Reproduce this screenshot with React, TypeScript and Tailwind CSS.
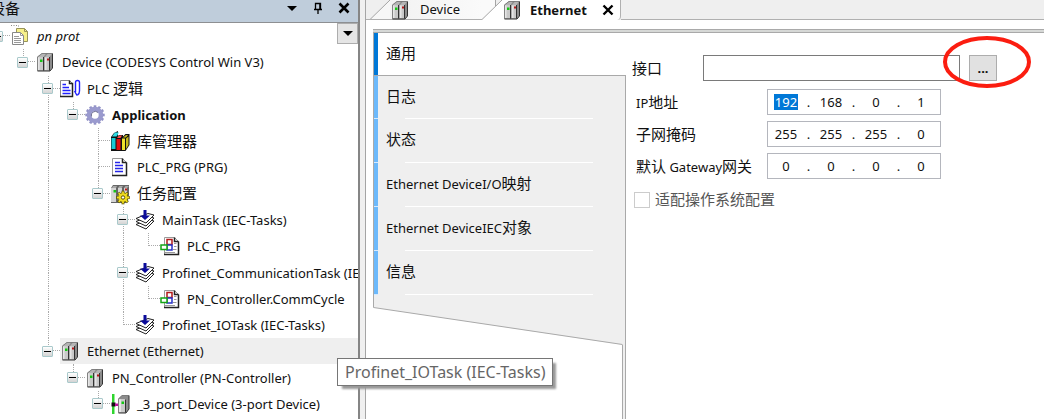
import type { ReactNode } from 'react';

type IconName = 'project' | 'device' | 'logic' | 'gear' | 'books' | 'page' | 'config' | 'task' | 'call' | 'port';
type Line = 'none' | 'full' | 'end' | 'bar';

interface TreeRow {
  label: string;
  icon: IconName;
  lines: Line[];
  expandable?: boolean;
  bold?: boolean;
  italic?: boolean;
  selected?: boolean;
}

const rows: TreeRow[] = [
  { label: 'pn prot', icon: 'project', lines: ['end'], expandable: true, italic: true },
  { label: 'Device (CODESYS Control Win V3)', icon: 'device', lines: ['none', 'end'], expandable: true },
  { label: 'PLC 逻辑', icon: 'logic', lines: ['none', 'none', 'full'], expandable: true },
  { label: 'Application', icon: 'gear', lines: ['none', 'none', 'bar', 'end'], expandable: true, bold: true },
  { label: '库管理器', icon: 'books', lines: ['none', 'none', 'bar', 'none', 'full'] },
  { label: 'PLC_PRG (PRG)', icon: 'page', lines: ['none', 'none', 'bar', 'none', 'full'] },
  { label: '任务配置', icon: 'config', lines: ['none', 'none', 'bar', 'none', 'end'], expandable: true },
  { label: 'MainTask (IEC-Tasks)', icon: 'task', lines: ['none', 'none', 'bar', 'none', 'none', 'full'], expandable: true },
  { label: 'PLC_PRG', icon: 'call', lines: ['none', 'none', 'bar', 'none', 'none', 'bar', 'end'] },
  { label: 'Profinet_CommunicationTask (IEC-Tasks)', icon: 'task', lines: ['none', 'none', 'bar', 'none', 'none', 'full'], expandable: true },
  { label: 'PN_Controller.CommCycle', icon: 'call', lines: ['none', 'none', 'bar', 'none', 'none', 'bar', 'end'] },
  { label: 'Profinet_IOTask (IEC-Tasks)', icon: 'task', lines: ['none', 'none', 'bar', 'none', 'none', 'end'] },
  { label: 'Ethernet (Ethernet)', icon: 'device', lines: ['none', 'none', 'end'], expandable: true, selected: true },
  { label: 'PN_Controller (PN-Controller)', icon: 'device', lines: ['none', 'none', 'none', 'end'], expandable: true },
  { label: '_3_port_Device (3-port Device)', icon: 'port', lines: ['none', 'none', 'none', 'none', 'end'], expandable: true },
];

const pages = ['通用', '日志', '状态', 'Ethernet DeviceI/O映射', 'Ethernet DeviceIEC对象', '信息'];

const addresses = [
  { label: 'IP地址', parts: ['192', '168', '0', '1'], active: 0 },
  { label: '子网掩码', parts: ['255', '255', '255', '0'], active: -1 },
  { label: '默认 Gateway网关', parts: ['0', '0', '0', '0'], active: -1 },
];

function Label({ text }: { text: string }) {
  return (
    <>
      {text.split(/([\u4e00-\u9fff]+)/).map((part, i) =>
        i % 2 ? <span key={i} className="text-[15px]">{part}</span> : part,
      )}
    </>
  );
}

function PageShape({ x = 0 }: { x?: number }) {
  return (
    <g transform={`translate(${x} 0)`}>
      <path d="M2.5 1.5h10l4 4v13h-14z" fill="#fff" stroke="#9a9a9a" />
      <path d="M12.5 1.5v4h4M16.5 5.5V18.5H2" fill="none" stroke="#222" strokeWidth="1.5" />
    </g>
  );
}

function Cog({ r, ring, fill, edge }: { r: number; ring: number; fill: string; edge: string }) {
  const teeth = [0, 45, 90, 135];
  return (
    <g>
      {teeth.map((a) => (
        <path key={a} d={`M0 ${-r}V${r}`} stroke={edge} strokeWidth={r * 0.42} transform={`rotate(${a})`} />
      ))}
      <circle r={r * 0.7} fill={fill} stroke={edge} strokeWidth=".8" />
      {teeth.map((a) => (
        <path key={a} d={`M0 ${-r + 0.7}v${r * 0.35}M0 ${r - 0.7}v${-r * 0.35}`} stroke={fill} strokeWidth={r * 0.26} transform={`rotate(${a})`} />
      ))}
      <circle r={ring} fill="#fff" stroke={edge} />
    </g>
  );
}

function Icon({ name }: { name: IconName }) {
  const art: Record<IconName, ReactNode> = {
    project: (
      <g transform="translate(-1 -1)">
        <path d="M.5 14V.5h9v4" fill="none" stroke="#888" strokeDasharray="1 1.5" />
        <path d="M7.500 3.500h8l3 3v10h-11z" fill="#f6f08a" stroke="#98945a" />
        <path d="M15.500 3.500v3h3" fill="none" stroke="#98945a" />
        <path d="M3.500 7.500h8l3 3v9h-11z" fill="#fff" stroke="#888" />
        <path d="M11.500 7.500v3h3M5 11.500h5M5 13.500h7M5 15.500h7M5 17.500h7" fill="none" stroke="#999" />
      </g>
    ),
    device: (
      <>
        <path d="M2 5 7 1h10.500v14.500L15 19H2z" fill="#8c8c8c" />
        <path d="M2.500 5 7 1.500h4L8.500 5zM10 5l3-3.500h4L14.500 5z" fill="#b5b5b5" />
        <path d="M2.500 5H8v13.500H2.500zM9.500 5H14v13.500H9.500z" fill="#c9c9c9" />
        <path d="M3 5.500h1.500V18H3zM10 5.500h1.500V18H10z" fill="#e6e6e6" />
        <path d="M8.500 5v13.500M14.500 5v13.500M2.500 19H15l2.500-3V1.500" fill="none" stroke="#333" />
        <path d="M2.500 19V5L7 1.500h10" fill="none" stroke="#777" strokeWidth=".8" />
        <path d="M5 7.500h2.500V10H5z" fill="#14c814" />
        <path d="M12 6.500h2V8.500h-2z" fill="#b81818" />
      </>
    ),
    logic: (
      <>
        <path d="M.5 1.500h9l3 3v13H.5z" fill="#fff" stroke="#888" />
        <path d="M9.500 1.500v3h3v13H0" fill="none" stroke="#222" strokeWidth="1.500" />
        <path d="M2.500 5.500H6M2.500 8.500H9M2.500 11.500h8M2.500 14.500h8" stroke="#2020ff" strokeWidth="1.600" />
        <path d="M15.500 13V3.500q0-2 2-2t2 2V12q0 3 -2 4M14.500 12l2.500 4.500" fill="none" stroke="#2020ff" strokeWidth="1.400" />
      </>
    ),
    gear: (
      <g transform="translate(10 10)">
        {[0, 30, 60, 90, 120, 150].map((a) => (
          <path key={a} d="M0-9.700V9.700" stroke="#9292c6" strokeWidth="2.600" transform={`rotate(${a})`} />
        ))}
        <circle r="6" fill="#fff" stroke="#9a9ace" strokeWidth="4.600" />
        <path d="M-3.600 1.500A4 4 0 0 1 3-2.500" fill="none" stroke="#6e6e92" />
      </g>
    ),
    books: (
      <>
        <path d="M1 6 4 2l4-2v4L7 20H1z" fill="#111" />
        <path d="M1.500 7h4v11h-4z" fill="#16cbd5" />
        <path d="M2 5.500 5 1.500h4L6.500 5.500z" fill="#30dce4" />
        <path d="M6 7l3-3h4v16H6z" fill="#111" />
        <path d="M6.500 8h4v11h-4z" fill="#e01010" />
        <path d="M7 7l2-2.500h3L10.500 7z" fill="#ff4b4b" />
        <path d="M11.500 7l4-4h4v11l-4 6h-4z" fill="#111" />
        <path d="M12 7.500h3V19h-3z" fill="#eee22a" />
        <path d="M13 6.500 16 4h2l-2 2.500zM16 7.500l2.500-2V14L16 18z" fill="#c6ba1d" />
      </>
    ),
    page: (
      <>
        <PageShape />
        <path d="M5 5.500h5M5 8.500h8M5 11.500h8M5 14.500h8" stroke="#2525e8" strokeWidth="1.600" />
      </>
    ),
    config: (
      <>
        <path d="M1 4 3 1h16v13l-3 5H1z" fill="#666" />
        <path d="M1 4h5v14H1zM8 4h4v14H8zM14 4h3v10h-3z" fill="#d5d5d5" />
        <path d="M3 2h4L6 4H2zM9.500 2H13l-1.500 2H8zM15.500 2H19l-2 2h-3z" fill="#aaa" />
        <path d="M3.500 6h2.500v2.500H3.500z" fill="#18c418" />
        <path d="M15 4.500h2v2h-2z" fill="#c01c1c" />
        <g transform="translate(13 13.500)"><Cog r={6.800} ring={1.700} fill="#f0dc20" edge="#575000" /></g>
      </>
    ),
    task: (
      <>
        <path d="M1 14.500 13 9.500l6 1.500-8 8-10-4.500z" fill="#fff" stroke="#222" />
        <path d="M1 11.500 13 6.500l6 1.500-8 8-10-4.500z" fill="#fff" stroke="#222" />
        <path d="M1 8.500 13 3.500l6 1.500-8 8L1 8.500z" fill="#fff" stroke="#222" />
        <path d="M8.500 0h3v5.500H15l-5 4.500-5-4.500h3.500z" fill="#0b0b9a" />
      </>
    ),
    call: (
      <>
        <PageShape x={2} />
        <path d="M14 7.500h2.500M14 10.500h2.500M13 13.500h3.500M5 16.500h10" stroke="#999" />
        <path d="M7 3.500h5v5H7z" fill="#fff" stroke="#b31a1a" strokeWidth="1.500" />
        <path d="M7 9h5v5H7z" fill="#fff" stroke="#2732c8" strokeWidth="1.500" />
        <path d="M1 9h6v4.500H1z" fill="#fff" stroke="#15a415" strokeWidth="1.500" />
      </>
    ),
    port: (
      <>
        <path d="M2 0h2.500v20H2z" fill="#2ed52e" />
        <path d="M1.500 8.500h4v4h-4z" fill="#111" />
        <path d="M5 9.500h4v2.500H5z" fill="#c010a0" />
        <path d="M8 5 12 1h7v14l-3 4H8z" fill="#8c8c8c" />
        <path d="M8.500 5h7v13.500h-7z" fill="#cacaca" />
        <path d="M9 5.500h2V18H9z" fill="#e6e6e6" />
        <path d="M15.500 5.500V18.500M8.500 19H16l3-4V1.500" fill="none" stroke="#333" />
        <path d="M8.500 19V5L12 1.500h6.500" fill="none" stroke="#777" strokeWidth=".8" />
        <path d="M11.500 7.500H14V10h-2.500z" fill="#14c814" />
      </>
    ),
  };
  return (
    <svg width="20" height="20" viewBox="0 0 20 20" className="shrink-0 overflow-visible" aria-hidden="true">
      {art[name]}
    </svg>
  );
}

function Branch({ line, button }: { line: Line; button: boolean }) {
  const elbow = line === 'full' || line === 'end';
  return (
    <span className="relative grid w-[25px] shrink-0 grid-cols-[13px_12px] grid-rows-2">
      <span className={`col-start-2 border-dotted border-[#aaa] ${line !== 'none' ? 'border-l' : ''} ${elbow ? 'border-b' : ''}`} />
      <span className={`col-start-2 border-dotted border-[#aaa] ${line === 'full' || line === 'bar' ? 'border-l' : ''}`} />
      {button && (
        <button
          type="button"
          aria-label="Collapse"
          className="absolute inset-0 m-auto flex size-[11px] items-center justify-center rounded-[1px] border border-[#a9c9cb] bg-linear-to-b from-white to-[#d4d4d4]"
        >
          <span className="h-px w-[7px] bg-black" />
        </button>
      )}
    </span>
  );
}

function Slant({ active }: { active?: boolean }) {
  return (
    <svg width="20" height="20" viewBox="0 0 20 20" className="shrink-0" aria-hidden="true">
      {active && <path d="M0 0h14v20H0z" fill="#fafafa" />}
      <path d="M0 20 20 0v20z" fill={active ? '#fff' : '#f7f7f7'} />
      <path d="M0 19.500 20 0" fill="none" stroke="#a5a5a5" />
      {active && <path d="M13.500 0v6" stroke="#a5a5a5" />}
      {!active && <path d="M0 19.500h20" stroke="#b0b0b0" />}
    </svg>
  );
}

function DevicePane() {
  return (
    <aside className="flex w-[360px] shrink-0 flex-col border-r-2 border-[#858585] bg-white">
      <header className="flex h-[23px] shrink-0 items-center border-b border-[#8d8f92] bg-[#bfcddb]">
        <h2 className="-ml-[10px] -mt-1.5 flex-1 text-[15px]">设备</h2>
        <div className="-mt-1.5 mr-[7px] flex gap-[12px]">
          <button type="button" aria-label="Menu">
            <svg width="14" height="14" viewBox="0 0 14 14"><path d="M2 5h10L7 10z" /></svg>
          </button>
          <button type="button" aria-label="Pin">
            <svg width="14" height="14" viewBox="0 0 14 14" fill="none" stroke="#000">
              <path d="M4.500 8V2.500h5V8M3 8.500h8M7 9v4" strokeWidth="1.300" />
              <path d="M9 3v5" strokeWidth="1.500" />
            </svg>
          </button>
          <button type="button" aria-label="Close">
            <svg width="14" height="14" viewBox="0 0 14 14"><path d="m2.500 2.500 9 9m0-9-9 9" stroke="#000" strokeWidth="2.600" /></svg>
          </button>
        </div>
      </header>
      <div className="relative flex min-h-0 flex-1 overflow-hidden pb-0.5">
        <ul className="-ml-[15px] grid min-w-0 flex-1 auto-rows-fr">
          {rows.map((row, i) => (
            <li key={i} className="flex min-h-0 min-w-0">
              {row.lines.map((line, d) => (
                <Branch key={d} line={line} button={!!row.expandable && d === row.lines.length - 1} />
              ))}
              <span
                className={`flex min-w-0 flex-1 items-center gap-[7px] overflow-hidden whitespace-nowrap ${row.selected ? 'bg-[#efefef]' : ''} ${row.bold ? 'font-bold' : ''} ${row.italic ? 'italic' : ''}`}
              >
                <Icon name={row.icon} />
                <span><Label text={row.label} /></span>
              </span>
            </li>
          ))}
        </ul>
        <button type="button" aria-label="Options" className="absolute right-0 top-0 flex size-[21px] items-center justify-center border border-[#adadad] bg-[#e5e5e5]">
          <svg width="12" height="8" viewBox="0 0 12 8"><path d="M1 1h10L6 6z" /></svg>
        </button>
      </div>
    </aside>
  );
}

function AddressField({ label, parts, active }: { label: string; parts: string[]; active: number }) {
  return (
    <div role="group" aria-label={label} className="flex h-[26px] items-center">
      <span className="w-[131px] whitespace-nowrap"><Label text={label} /></span>
      <div className="flex h-[26px] w-[174px] items-center border border-[#b4b6bd] bg-white pl-1.5">
        {parts.map((part, i) => (
          <span key={i} className="flex items-center">
            <input
              aria-label={`${label} ${i + 1}`}
              defaultValue={part}
              className={`h-4 w-6 text-center ${i === active ? 'bg-[#0078d7] text-white' : ''}`}
            />
            {i < 3 && <span className="w-[21px] text-center">.</span>}
          </span>
        ))}
      </div>
    </div>
  );
}

export default function App() {
  return (
    <div className="relative flex h-screen min-h-[419px] overflow-hidden bg-[#f0f0f0] font-['Noto_Sans','Noto_Sans_CJK_SC',sans-serif] text-[13px] leading-5 text-[#111]">
      <DevicePane />
      <main className="ml-[5px] flex min-w-0 flex-1 flex-col border-l border-[#a5a5a5] bg-white">
        <nav className="flex h-5 shrink-0 bg-[#efefef]">
          <span className="w-1 border-b border-[#b0b0b0]" />
          <Slant />
          <button type="button" className="flex w-[92px] items-center gap-2.5 border-b border-[#b0b0b0] bg-linear-to-r from-[#f2f2f2] to-[#fafafa]">
            <Icon name="device" />
            <span className="whitespace-nowrap pb-px">Device</span>
          </button>
          <Slant active />
          <button type="button" className="flex w-[94px] items-center gap-2 bg-white font-bold">
            <Icon name="device" />
            <span className="whitespace-nowrap pb-px">Ethernet</span>
          </button>
          <button type="button" aria-label="Close tab" className="flex w-[25px] items-center justify-center rounded-br border-r border-[#b0b0b0] bg-white">
            <svg width="12" height="12" viewBox="0 0 12 12"><path d="m1.500 1.500 9 9m0-9-9 9" stroke="#000" strokeWidth="2.400" /></svg>
          </button>
          <span className="flex-1 border-b border-[#b0b0b0]" />
        </nav>
        <div className="ml-[7px] mt-[9px] h-1 shrink-0 border-y border-[#a9a9a9] bg-[#d6d8d6]" />
        <div className="ml-[7px] flex min-h-0 flex-1">
          <nav className="flex w-[253px] shrink-0 flex-col">
            {pages.map((page, i) =>
              i === 0 ? (
                <button key={page} type="button" className="flex h-[42px] shrink-0 border-l border-[#a9a9a9] text-left">
                  <span className="w-1 self-stretch bg-[#0078d7]" />
                  <span className="self-center pb-0.5 pl-2"><Label text={page} /></span>
                </button>
              ) : (
                <button
                  key={page}
                  type="button"
                  className={`flex h-11 shrink-0 border-x border-[#a9a9a9] bg-[#efefef] text-left ${i === 1 ? 'border-t' : ''}`}
                >
                  <span className="w-1 self-stretch border-b border-[#d5eaff] bg-[#6cb9fb]" />
                  <span className="grid h-full flex-1 grid-rows-[1fr_1px]">
                    <span className="self-center pb-0.5 pl-2"><Label text={page} /></span>
                    <span className="ml-[27px] mr-8 bg-white" />
                  </span>
                </button>
              ),
            )}
            <svg viewBox="0 0 253 50" preserveAspectRatio="none" className="h-[50px] w-full shrink-0" aria-hidden="true">
              <path d="M0 0h253v50h-3L.5 12.500z" fill="#efefef" />
              <path d="M.5 0v12.500L249.500 49.500M252.500 0v50" fill="none" stroke="#a9a9a9" />
            </svg>
            <div className="flex flex-1 border-r border-[#a9a9a9] bg-[#efefef] pr-0.5">
              <div className="flex-1 border-r border-[#a9a9a9] bg-white" />
            </div>
          </nav>
          <form className="min-w-0 flex-1 pl-1.5 pt-[22px]">
            <div className="flex items-center">
              <label htmlFor="iface" className="w-[71px]"><Label text="接口" /></label>
              <input id="iface" className="h-[26px] w-[257px] border border-[#7a7a7a] bg-white px-1" />
              <button type="button" className="ml-[9px] h-[26px] w-7 border border-[#adadad] bg-[#e1e1e1] font-bold leading-5">...</button>
            </div>
            <div className="mt-2 flex flex-col gap-1.5 pl-1">
              {addresses.map((a) => <AddressField key={a.label} {...a} />)}
            </div>
            <label className="mt-2.5 flex items-center gap-[5px] pl-[2px] text-[#555]">
              <input type="checkbox" disabled className="size-4 appearance-none border border-[#ccc] bg-white" />
              <span><Label text="适配操作系统配置" /></span>
            </label>
          </form>
        </div>
      </main>
      <svg className="pointer-events-none absolute left-[942px] top-[35px]" width="90" height="54" viewBox="0 0 90 54" aria-hidden="true">
        <ellipse cx="45" cy="27" rx="42" ry="24" fill="none" stroke="#fb1d10" strokeWidth="4" />
      </svg>
      <div role="tooltip" className="absolute left-[337px] top-[358px] border border-[#767676] bg-white px-[7px] text-base leading-[26px] text-[#666] shadow-[4px_4px_2px_-1px_#999]">
        Profinet_IOTask (IEC-Tasks)
      </div>
    </div>
  );
}
